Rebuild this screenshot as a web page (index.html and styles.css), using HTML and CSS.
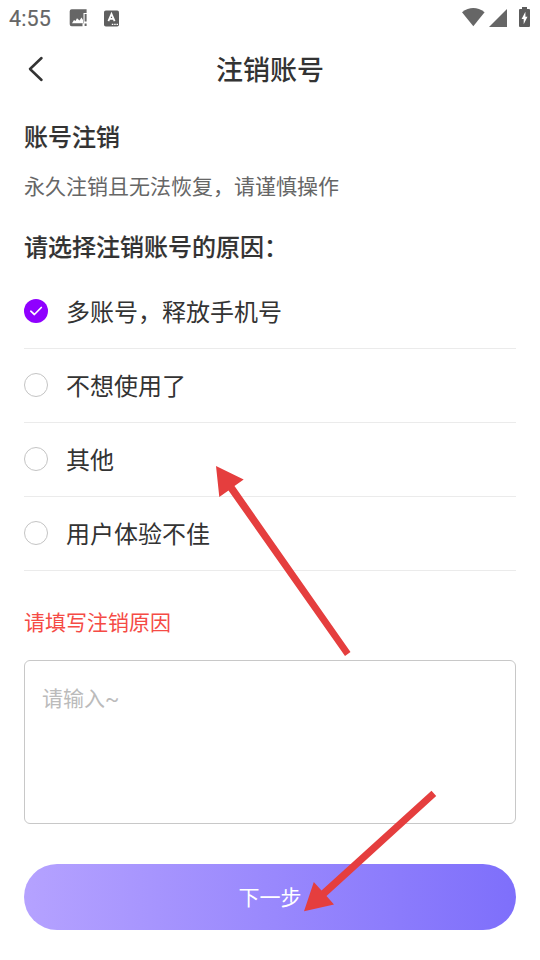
FILE: index.html
```html
<!DOCTYPE html>
<html lang="zh-CN">
<head>
<meta charset="utf-8">
<title>注销账号</title>
<link rel="stylesheet" href="styles.css">
</head>
<body>
<div class="screen">
  <div class="status">
    <span class="time">4:55</span>
    <svg class="s-img" width="18" height="18" viewBox="0 0 18 18"><path fill="#666" fill-rule="evenodd" d="M2.7 .3H17.6V4H14.5V14.5H13.5V17.3H2.7Q.7 17.3 .7 15.3V2.3Q.7 .3 2.7 .3ZM3 14.3H14V11L12.5 8.5L10.5 11.5L8 9.2L6.5 12L5 11Z"/><path fill="#666" d="M15.6 5H17.6V12.6H15.6ZM15.6 14.4H17.6V17H15.6Z"/></svg>
    <svg class="s-a" width="15" height="17" viewBox="0 0 15 17"><rect y=".5" width="15" height="16" rx="1.8" fill="#5f5f5f"/><path d="M4.4 11.2L7.5 4L10.6 11.2M5.6 8.8H9.4" fill="none" stroke="#fff" stroke-width="1.8"/><path d="M7.8 14.4h1.5M10.2 14.4h1.5M12.5 14.4h1.5" stroke="#fff" stroke-width="1.4"/></svg>
    <svg class="s-wifi" width="23" height="19" viewBox="0 0 23 19"><path fill="#666" d="M0 4.2Q11.3-4.2 22.6 4.2L11.3 18.3Z"/></svg>
    <svg class="s-cell" width="18" height="18" viewBox="0 0 18 18"><path fill="#666" d="M18 0V18H0Z"/></svg>
    <svg class="s-bat" width="11" height="20" viewBox="0 0 11 20"><path fill="#5c5c5c" d="M3 0H8V2H10Q11 2 11 3V19Q11 20 10 20H1Q0 20 0 19V3Q0 2 1 2H3Z"/><path fill="#fff" d="M6.4 4.8L2.6 12H4.7V17.2L8.5 9.8H6.4Z"/></svg>
  </div>
  <header class="nav">
    <svg class="back" width="16" height="26" viewBox="0 0 16 26"><path d="M13.5 2L2 13L13.5 24" fill="none" stroke="#333" stroke-width="2.5" stroke-linecap="round" stroke-linejoin="round"/></svg>
    <h1>注销账号</h1>
  </header>
  <main>
    <h2>账号注销</h2>
    <p class="desc">永久注销且无法恢复，请谨慎操作</p>
    <h2>请选择注销账号的原因：</h2>
    <ul class="reasons">
      <li><span class="radio checked"><svg width="24" height="24" viewBox="0 0 24 24"><path d="M6.8 12.2L10.4 15.5L17.3 8.5" fill="none" stroke="#fff" stroke-width="1.7" stroke-linecap="round" stroke-linejoin="round"/></svg></span>多账号，释放手机号</li>
      <li><span class="radio"></span>不想使用了</li>
      <li><span class="radio"></span>其他</li>
      <li><span class="radio"></span>用户体验不佳</li>
    </ul>
    <p class="warn">请填写注销原因</p>
    <div class="input">请输入~</div>
    <div class="next">下一步</div>
  </main>
  <svg class="arrows" width="540" height="960" viewBox="0 0 540 960"><g fill="#e53e3e"><path d="M216 466L243.7 479.5L234.5 486L350.5 652L345 656L228.5 490.5L219.3 497Z"/><path d="M304 911.3L313.8 882L321.5 890.5L431.5 790.8L436.2 796L326.5 896L334 904.5Z"/></g></svg>
</div>
</body>
</html>
```
FILE: styles.css
```css
* { box-sizing: border-box; }
body { margin: 0; background: #fff; color: #333; font-family: "Noto Sans CJK SC", sans-serif; }
h1, h2, p, ul { margin: 0; padding: 0; }
.screen { position: relative; width: 540px; height: 960px; overflow: hidden; }
.status { display: flex; align-items: center; height: 36px; padding: 0 10px 0 9px; }
.time { width: 60px; font: 400 21.5px/36px Roboto, sans-serif; color: #666; letter-spacing: .1px; padding-top: 2px; -webkit-text-stroke: .15px #666; }
.s-a { margin-left: 17px; }
.s-wifi { margin-left: auto; margin-top: -2px; }
.s-cell { margin-left: 4px; }
.s-bat { margin-left: 12px; margin-top: -2px; }
.nav { display: grid; grid-template-columns: 24px 1fr 24px; align-items: center; height: 66px; padding: 0 28px; }
h1 { font-size: 27px; line-height: 40px; font-weight: 500; text-align: center; padding-bottom: 1px; }
main { padding: 16px 24px 0; }
h2 { font-size: 24px; line-height: 36px; font-weight: 500; -webkit-text-stroke: .15px #333; }
.desc { font-size: 21px; line-height: 32px; color: #666; margin: 15px 0 27px; }
.reasons { list-style: none; margin-top: 11px; }
.reasons li { display: flex; align-items: center; height: 74px; padding-bottom: 2px; border-bottom: 1px solid #ebebeb; font-size: 24px; }
.radio { width: 24px; height: 24px; border: 1.5px solid #c4c4c4; border-radius: 50%; margin-right: 18px; }
.checked { background: #8f00ff; border: 0; }
.checked svg { display: block; }
.warn { font-size: 21px; line-height: 32px; color: #f54b45; margin: 34px 0 23px; }
.input { height: 164px; border: 1px solid #c8c8c8; border-radius: 6px; padding: 22px 17px; font-family: Roboto, "Noto Sans CJK SC", sans-serif; font-size: 21px; line-height: 32px; color: #bbb; }
.next { height: 66px; margin-top: 40px; border-radius: 33px; background: linear-gradient(90deg, #b5a2ff, #7e6ffb); color: #fff; font-size: 21px; line-height: 64px; text-align: center; }
.arrows { position: absolute; left: 0; top: 0; pointer-events: none; }
```
